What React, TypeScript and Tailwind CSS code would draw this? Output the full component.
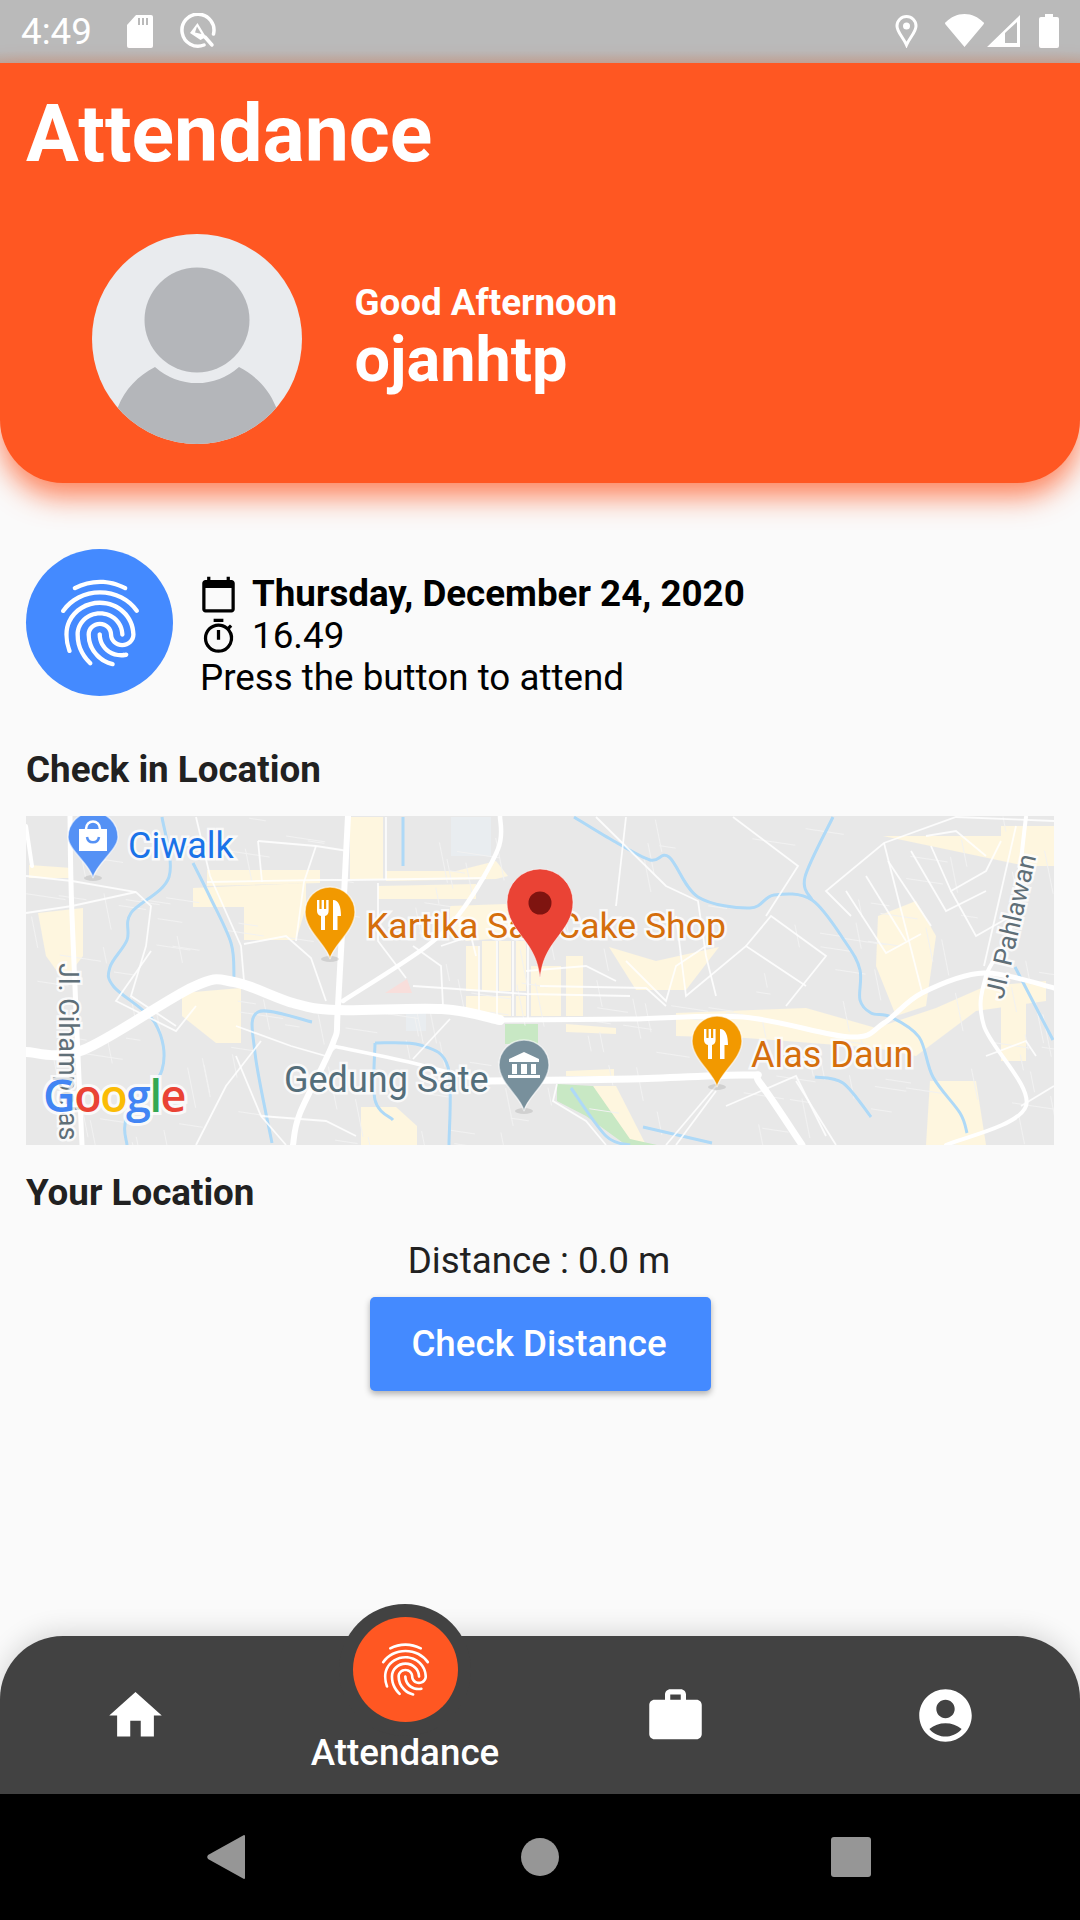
import React from 'react';
import { MdAccountCircle, MdCalendarToday, MdFingerprint, MdHome, MdOutlineTimer, MdWork } from 'react-icons/md';

const yellow = [
  '3,49 46,52 46,62 3,62',
  '12,97 57,92 57,140 38,165 20,140',
  '181,54 294,54 294,67 181,70',
  '167,72 280,67 280,91 270,124 218,124 218,91 167,91',
  '324,1 357,1 357,63 324,63',
  '360,55 430,55 470,45 482,60 470,63 360,65',
  '352,70 450,68 450,83 352,83',
  '424,90 480,88 500,120 440,125 424,110',
  '440,130 452,130 452,175 440,175',
  '456,125 470,125 470,175 456,175',
  '473,125 485,125 485,175 473,175',
  '490,125 500,125 500,175 490,175',
  '440,180 485,180 485,200 440,200',
  '490,180 500,180 500,200 490,200',
  '505,150 535,150 535,200 505,200',
  '540,140 557,140 557,200 540,200',
  '156,177 215,172 215,227 190,227 156,200',
  '335,291 370,291 391,310 391,329 335,329',
  '583,131 630,145 693,131 660,174 610,174',
  '650,197 780,192 850,212 910,192 960,170 1020,165 1020,185 950,195 890,240 850,232 720,222 650,220',
  '852,100 890,85 910,120 900,190 870,200 850,150',
  '857,20 1028,20 1028,50 1000,50',
  '975,175 1000,175 1000,245 975,245',
  '904,265 950,265 960,329 900,329',
  '567,270 590,270 620,329 600,329',
  '975,10 1028,10 1028,40 975,40',
  '540,208 590,212 590,218 540,216',
  '540,255 588,253 588,260 540,260',
];

const pale = ['425,1 465,1 465,40 425,40', '218,75 250,70 250,115 218,115', '380,195 400,195 400,215 380,215'];

const water = [
  '136,1 143,61 105,97 101,124 84,151 88,171 129,207 136,254 101,301 101,329',
  '167,47 184,81 205,127 208,161',
  '286,206 232,196 229,237 246,327',
  '349,227 394,229 422,251 423,329',
  '349,227 349,284 367,304',
  '548,1 586,24 624,44 643,41 672,81 724,92 748,79 786,84 820,127 834,154 834,184 845,197 865,201 893,221 907,261 934,297 941,317',
  '807,1 779,61 786,84',
  '789,261 817,267 845,301',
  '989,151 1027,224',
  '617,311 686,327',
  '377,1 377,50',
  '545,272 580,320 604,329',
];

const smallRoads = [
  '0,60 46,65 110,76 125,90 120,130 105,180 150,210',
  '0,97 46,90 110,76',
  '125,135 90,185 150,215 170,190',
  '181,66 294,64 322,64 460,62',
  '170,1 184,60 215,130 218,165',
  '218,128 260,120 285,142 300,185',
  '232,25 290,30 322,35',
  '232,25 236,66',
  '290,30 278,66 270,125',
  '360,1 360,64',
  '352,67 352,125 380,162',
  '387,130 415,150 417,190',
  '417,172 500,178 604,180',
  '387,170 417,172',
  '453,130 453,200',
  '471,125 471,200',
  '487,125 487,200',
  '502,125 502,205',
  '500,155 560,150 590,165',
  '415,130 445,120 450,140',
  '387,243 424,203',
  '210,210 265,230 300,240 310,231',
  '235,225 200,270 170,329',
  '210,240 235,300 260,329',
  '235,300 300,305 330,320',
  '570,1 640,70 672,85 680,140 690,180',
  '514,170 620,172 640,190',
  '600,145 640,185 650,150 680,130',
  '707,1 772,50 740,100',
  '1028,5 930,1 858,27 800,75 825,100',
  '858,27 896,176',
  '820,75 860,137 895,118',
  '840,60 880,125',
  '862,45 905,110',
  '885,35 920,95 960,75',
  '905,30 925,75 960,55 975,25',
  '900,20 930,15 960,40',
  '925,75 950,120 985,100',
  '990,10 958,150',
  '995,290 1028,270',
  '960,240 1000,225 1010,240',
  '700,290 770,260 800,320',
  '770,265 810,329',
  '690,270 640,329',
  '690,275 650,329',
  '600,1 590,90',
  '650,100 660,180 720,130 780,170',
  '720,130 745,100 800,140 760,190',
  '531,268 527,285 560,305 580,329',
];

// smooth a point list into a curved path
const toPath = (points: string) => {
  const pts = points.split(' ').map((p) => p.split(',').map(Number));
  let d = `M${pts[0][0]} ${pts[0][1]}`;
  for (let i = 0; i < pts.length - 1; i++) {
    const a = pts[Math.max(i - 1, 0)];
    const b = pts[i];
    const c = pts[i + 1];
    const e = pts[Math.min(i + 2, pts.length - 1)];
    d += `C${b[0] + (c[0] - a[0]) / 6} ${b[1] + (c[1] - a[1]) / 6} ${c[0] - (e[0] - b[0]) / 6} ${c[1] - (e[1] - b[1]) / 6} ${c[0]} ${c[1]}`;
  }
  return d;
};

// the map has a dense net of very fine streets
const fineStreets = (() => {
  const out: string[] = [];
  let seed = 17;
  const rnd = () => {
    seed = (seed * 16807) % 2147483647;
    return seed / 2147483647;
  };
  for (let i = 0; i < 190; i++) {
    const x = rnd() * 1028;
    const y = rnd() * 329;
    const len = 14 + rnd() * 30;
    const flat = rnd() > 0.5;
    const dx = flat ? len : len * 0.2;
    const dy = flat ? len * 0.15 : len;
    out.push(`M${x} ${y}l${dx} ${dy}`);
  }
  return out;
})();

const Pin = ({ x, top, tip, fill, children }: { x: number; top: number; tip: number; fill: string; children?: React.ReactNode }) => (
  <g>
    <ellipse cx={x} cy={tip} rx="9" ry="3" fill="#000" opacity="0.1" />
    <path
      d={`M${x} ${tip}C${x - 3} ${tip - 14} ${x - 25} ${tip - 28} ${x - 25} ${top + 25}A25 25 0 1 1 ${x + 25} ${top + 25}C${x + 25} ${tip - 28} ${x + 3} ${tip - 14} ${x} ${tip}Z`}
      fill={fill}
      stroke="#fff"
      strokeOpacity="0.6"
      strokeWidth="1.5"
    />
    {children}
  </g>
);

const Cutlery = ({ x, y }: { x: number; y: number }) => (
  <g transform={`translate(${x} ${y})`} fill="#fff">
    <path d="M-13 -14h2.4v9h2.2v-9h2.4v9h2.2v-9H-1.4V-3c0 3-1.700 4.500-3.600 5V16h-4V2c-2-.5-4-2-4-5Z" />
    <path d="M3 -14c6 0 8 7 8 16H7.500V16H3Z" />
  </g>
);

const MapLabel = ({ x, y, color, size = 36, transform, children }: { x: number; y: number; color: string; size?: number; transform?: string; children: React.ReactNode }) => (
  <text
    x={x}
    y={y}
    transform={transform}
    fill={color}
    fontSize={size}
    fontFamily="Roboto, sans-serif"
    stroke="#fff"
    strokeOpacity="0.75"
    strokeWidth="5"
    paintOrder="stroke"
  >
    {children}
  </text>
);

const MapView = () => (
  <svg viewBox="0 0 1028 329" className="block w-full h-full">
    <defs>
      <filter id="soft">
        <feGaussianBlur stdDeviation="0.45" />
      </filter>
    </defs>
    <rect width="1028" height="329" fill="#e8e8e8" />
    <g filter="url(#soft)">
      {pale.map((p) => (
        <polygon key={p} points={p} fill="#e9edf0" />
      ))}
      {yellow.map((p) => (
        <polygon key={p} points={p} fill="#fef6df" />
      ))}
      <polygon points="531,268 567,270 604,323 631,329 600,329 560,300 531,285" fill="#c8e8c4" />
      <rect x="479" y="208" width="33" height="20" fill="#c8e8c4" />
      <polygon points="359,177 381,163 386,177" fill="#f8dedb" />
      <path d={fineStreets.join('')} fill="none" stroke="#f2f2f2" strokeWidth="1" />
      {water.map((p) => (
        <path key={p} d={toPath(p)} fill="none" stroke="#aed9f7" strokeWidth="3" />
      ))}
      {smallRoads.map((p) => (
        <polyline key={p} points={p} fill="none" stroke="#fff" strokeOpacity="0.85" strokeWidth="1.8" />
      ))}
      <g fill="none" stroke="#fff" strokeLinejoin="round" strokeLinecap="round">
        <path d={toPath('0,236 57,234 167,171 208,166 267,187 311,194 416,193 474,204')} strokeWidth="10" />
        <path d={toPath('474,204 604,203 717,201 824,221 858,207 896,177 958,157 1028,172')} strokeWidth="5" />
        <path d={toPath('322,0 312,190 307,227 274,297 267,329')} strokeWidth="6" />
        <path d={toPath('44,0 46,100 56,329')} strokeWidth="5" />
        <path d={toPath('307,230 387,247 461,267')} strokeWidth="3.500" />
        <path d={toPath('461,265 604,263 721,259 734,267 776,329')} strokeWidth="7" />
        <path d={toPath('474,0 472,33 437,93 401,130 317,185')} strokeWidth="4.500" />
        <path d={toPath('1000,1 985,110 960,160 958,210 1000,290 920,329')} strokeWidth="4" />
        <path d={toPath('0,10 6,50')} strokeWidth="4" />
      </g>
    </g>

    <Pin x={67} top={-4} tip={62} fill="#5491f5">
      <path d="M53 13h28v22H53Z" fill="#fff" />
      <path d="M60 13c0-10 14-10 14 0" fill="none" stroke="#fff" strokeWidth="2.500" />
      <path d="M61 21c1 7 11 7 12 0" fill="none" stroke="#5491f5" strokeWidth="2.500" />
    </Pin>
    <MapLabel x={102} y={42} color="#1a73e8">Ciwalk</MapLabel>

    <Pin x={304} top={71} tip={143} fill="#f29900">
      <Cutlery x={304} y={98} />
    </Pin>
    <MapLabel x={340} y={122} size={35.6} color="#d56e0c">Kartika Sari Cake Shop</MapLabel>

    <MapLabel x={258} y={276} color="#546e7a">Gedung Sate</MapLabel>
    <Pin x={498} top={224} tip={295} fill="#78909c">
      <path d="M498 236l15 7v3h-30v-3ZM486 248h5v10h-5ZM495 248h6v10h-6ZM505 248h5v10h-5ZM482 259h32v3h-32Z" fill="#fff" />
    </Pin>

    <Pin x={691} top={200} tip={271} fill="#f29900">
      <Cutlery x={691} y={227} />
    </Pin>
    <MapLabel x={725} y={251} color="#d56e0c">Alas Daun</MapLabel>

    <MapLabel x={33} y={147} size={27} color="#5f6f78" transform="rotate(90 33 147)">Jl. Cihampelas</MapLabel>
    <MapLabel x={977} y={184} size={26} color="#5f6f78" transform="rotate(-77 977 184)">Jl. Pahlawan</MapLabel>

    <text
      x="17"
      y="296"
      fontSize="45"
      fontFamily="'Open Sans', sans-serif"
      fontWeight="600"
      letterSpacing="-1.500"
      stroke="#fff"
      strokeOpacity="0.8"
      strokeWidth="6"
      paintOrder="stroke"
    >
      <tspan fill="#4285f4">G</tspan>
      <tspan fill="#ea4335">o</tspan>
      <tspan fill="#fbbc05">o</tspan>
      <tspan fill="#4285f4">g</tspan>
      <tspan fill="#34a853">l</tspan>
      <tspan fill="#ea4335">e</tspan>
    </text>

    <path
      d="M514 162C512 145 507 135 497 122C489 111 481 102 481 86A33 33 0 1 1 547 86C547 102 539 111 531 122C521 135 516 145 514 162Z"
      fill="#ea4335"
      stroke="#fff"
      strokeOpacity="0.5"
    />
    <circle cx="514" cy="87" r="11.500" fill="#7f1410" />
  </svg>
);

const StatusBar = () => (
  <div className="relative h-[63px] shrink-0 bg-[#bababa] text-white">
    <div className="absolute inset-x-0 bottom-0 h-[12px] bg-gradient-to-b from-[#bababa] to-[#b9a9a1]" />
    <span className="absolute left-[21px] top-[10px] text-[36.750px] leading-[43px]">4:49</span>
    <svg className="absolute left-[127px] top-[15px]" width="26" height="33" viewBox="0 0 26 33" fill="#fff">
      <path d="M9 0h15a2 2 0 0 1 2 2v29a2 2 0 0 1-2 2H2a2 2 0 0 1-2-2V10Z" />
      <path d="M11 3h2v7h-2ZM15 3h2v7h-2ZM19 3h2v7h-2Z" fill="#bababa" />
    </svg>
    <svg className="absolute left-[180px] top-[13px]" width="37" height="36" viewBox="0 0 37 36" fill="none">
      <path d="M33.500 21A16 16 0 1 0 24 32" stroke="#fff" strokeWidth="3.500" strokeLinecap="round" />
      <path d="M25 24L32 32" stroke="#fff" strokeWidth="3.500" strokeLinecap="round" />
      <path d="M17.500 10L26 24L20.500 27L10 20Z" fill="#fff" />
      <path d="M17 13.500L21.500 21L15 19.500Z" fill="#bababa" />
    </svg>
    <svg className="absolute left-[895px] top-[15px]" width="23" height="33" viewBox="0 0 23 33" fill="none">
      <path d="M11.500 30C8 22 2 17 2 11A9.500 9.500 0 0 1 21 11C21 17 15 22 11.500 30Z" stroke="#fff" strokeWidth="3" />
      <circle cx="11.500" cy="11" r="3.500" fill="#fff" />
    </svg>
    <svg className="absolute left-[945px] top-[14px]" width="39" height="33" viewBox="0 0 39 33" fill="#fff">
      <path d="M19.500 33L1 11Q-1 9 1 8C6 3 12 0 19.500 0S33 3 38 8Q40 9 38 11Z" />
    </svg>
    <svg className="absolute left-[987px] top-[15px]" width="33" height="32" viewBox="0 0 33 32" fill="#fff">
      <path fillRule="evenodd" d="M33 0V32H0ZM30 7L18 18V28H30Z" />
    </svg>
    <svg className="absolute left-[1039px] top-[14px]" width="20" height="34" viewBox="0 0 20 34" fill="#fff">
      <path d="M6 0h8v3h4a2 2 0 0 1 2 2v27a2 2 0 0 1-2 2H2a2 2 0 0 1-2-2V5a2 2 0 0 1 2-2h4Z" />
    </svg>
  </div>
);

const Avatar = () => (
  <svg width="210" height="210" viewBox="0 0 210 210" className="shrink-0">
    <defs>
      <clipPath id="avatar-clip">
        <circle cx="105" cy="105" r="105" />
      </clipPath>
    </defs>
    <circle cx="105" cy="105" r="105" fill="#e9ebee" />
    <g clipPath="url(#avatar-clip)" fill="#b4b6ba">
      <circle cx="105" cy="86" r="52.500" />
      <path d="M26 173C33 155 46 142 63 133A63 63 0 0 0 147 133C164 142 177 155 184 173L190 215H20Z" />
    </g>
  </svg>
);

export default function App() {
  return (
    <div className="relative flex h-[1920px] w-[1080px] flex-col overflow-hidden bg-[#fafafa] font-['Roboto',sans-serif]">
      <StatusBar />

      {/* Header */}
      <header className="relative z-10 flex h-[420px] shrink-0 flex-col rounded-b-[63px] bg-[#ff5722] px-[26px] pt-[25px] text-white shadow-[0_14px_28px_rgba(255,87,34,0.72)]">
        <h1 className="text-[78.750px] font-bold leading-[92px]">Attendance</h1>
        <div className="mt-[54px] flex items-center pl-[66px]">
          <Avatar />
          <div className="ml-[52.500px] flex flex-col">
            <span className="text-[36.750px] font-bold leading-[43px]">Good Afternoon</span>
            <span className="-mt-[1px] text-[63px] font-bold leading-[74px]">ojanhtp</span>
          </div>
        </div>
      </header>

      {/* Content */}
      <main className="flex flex-1 flex-col px-[26px] pt-[66px]">
        <div className="flex items-start">
          <div className="flex h-[147px] w-[147px] shrink-0 items-center justify-center rounded-full bg-[#448aff] text-white">
            <MdFingerprint size={104} />
          </div>
          <div className="ml-[27px] mt-[24px] text-[36.750px] leading-[42px] text-black">
            <div className="flex items-center">
              <MdCalendarToday size={39} className="-ml-[1px] mr-[14px]" />
              <span className="font-bold">Thursday, December 24, 2020</span>
            </div>
            <div className="flex items-center">
              <MdOutlineTimer size={39} className="-ml-[1px] mr-[14px]" />
              <span>16.49</span>
            </div>
            <div>Press the button to attend</div>
          </div>
        </div>

        <h2 className="mt-[49px] text-[36.750px] font-bold leading-[43px] text-[#212121]">Check in Location</h2>
        <div className="mt-[25px] h-[329px] w-[1028px]">
          <MapView />
        </div>
        <h2 className="mt-[26px] text-[36.750px] font-bold leading-[43px] text-[#212121]">Your Location</h2>

        <div className="mt-[25px] flex flex-col items-center">
          <span className="-ml-[2px] text-[36.750px] leading-[43px] text-[#212121]">Distance : 0.0 m</span>
          <button className="mt-[15px] flex h-[94px] w-[341px] items-center justify-center rounded-[5px] bg-[#448aff] pr-[2px] text-[36.750px] font-medium text-white shadow-[0_3px_6px_rgba(0,0,0,0.3)]">
            Check Distance
          </button>
        </div>
      </main>

      {/* Bottom navigation */}
      <nav className="relative grid h-[158px] shrink-0 grid-cols-4 rounded-t-[63px] bg-[#424242] shadow-[0_-4px_26px_rgba(0,0,0,0.14)]">
        <div className="absolute left-[339px] top-[-32px] h-[132px] w-[132px] rounded-full bg-[#424242]" />
        <div className="flex items-start justify-center pt-[48px] text-white">
          <MdHome size={63} />
        </div>
        <div className="relative flex flex-col items-center text-white">
          <div className="-mt-[19px] flex h-[105px] w-[105px] items-center justify-center rounded-full bg-[#ff5722]">
            <MdFingerprint size={63} />
          </div>
          <span className="mt-[12px] text-[36.750px] font-medium leading-[37px]">Attendance</span>
        </div>
        <div className="flex items-start justify-center pt-[48px] text-white">
          <MdWork size={63} />
        </div>
        <div className="flex items-start justify-center pt-[48px] text-white">
          <MdAccountCircle size={63} />
        </div>
      </nav>

      {/* Android buttons */}
      <div className="flex h-[126px] shrink-0 items-center bg-black">
        <svg className="ml-[206px]" width="40" height="44" viewBox="0 0 40 44" fill="#969696">
          <path d="M38 0a1 1 0 0 1 1 1v42a1 1 0 0 1-1 1L2 24a3 3 0 0 1 0-4Z" />
        </svg>
        <div className="ml-[275px] h-[38px] w-[38px] rounded-full bg-[#969696]" />
        <div className="ml-[272px] h-[40px] w-[40px] rounded-[3px] bg-[#969696]" />
      </div>
    </div>
  );
}
